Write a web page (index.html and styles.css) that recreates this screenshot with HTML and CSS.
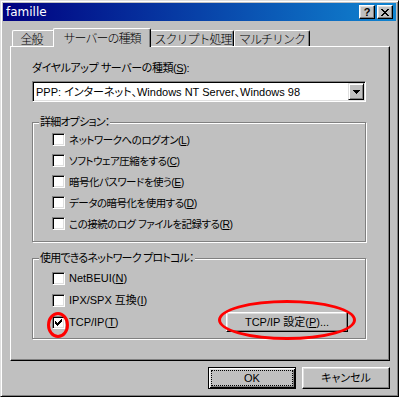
FILE: index.html
```html
<!DOCTYPE html>
<html lang="ja">
<head>
<meta charset="utf-8">
<title>famille</title>
<link rel="stylesheet" href="styles.css">
</head>
<body>
<div class="window">
  <div class="titlebar">
    <span class="title">famille</span>
    <div class="tb-buttons">
      <span class="tb-btn help">?</span>
      <span class="tb-btn close"><svg width="8" height="7" viewBox="0 0 8 7" shape-rendering="crispEdges"><path d="M0 0h2v1h-2zM6 0h2v1h-2zM1 1h2v1h-2zM5 1h2v1h-2zM2 2h4v1h-4zM3 3h2v1h-2zM2 4h4v1h-4zM1 5h2v1h-2zM5 5h2v1h-2zM0 6h2v1h-2zM6 6h2v1h-2z" fill="#000"/></svg></span>
    </div>
  </div>
  <div class="content">
    <div class="tabs">
      <div class="tab t1">全般</div>
      <div class="tab t2 active">サーバーの種類</div>
      <div class="tab t3">スクリプト処理</div>
      <div class="tab t4">マルチリンク</div>
    </div>
    <div class="panel">
      <div class="label">ダイヤルアップ サーバーの種類(<u>S</u>):</div>
      <div class="combo">
        <span class="combo-text">PPP: インターネット、Windows NT Server、Windows 98</span>
        <span class="combo-btn"><svg width="7" height="4" viewBox="0 0 7 4" shape-rendering="crispEdges"><path d="M0 0h7v1h-7zM1 1h5v1h-5zM2 2h3v1h-3zM3 3h1v1h-1z" fill="#000"/></svg></span>
      </div>
      <div class="group g1">
        <div class="group-title">詳細オプション：</div>
        <div class="row"><span class="cb"></span><span class="ja">ネットワークへのログオン(<u>L</u>)</span></div>
        <div class="row"><span class="cb"></span><span class="ja">ソフトウェア圧縮をする(<u>C</u>)</span></div>
        <div class="row"><span class="cb"></span><span class="ja">暗号化パスワードを使う(<u>E</u>)</span></div>
        <div class="row"><span class="cb"></span><span class="ja">データの暗号化を使用する(<u>D</u>)</span></div>
        <div class="row"><span class="cb"></span><span class="ja">この接続のログ ファイルを記録する(<u>R</u>)</span></div>
      </div>
      <div class="group g2">
        <div class="group-title">使用できるネットワーク プロトコル：</div>
        <div class="row"><span class="cb"></span><span>NetBEUI(<u>N</u>)</span></div>
        <div class="row"><span class="cb"></span><span>IPX/SPX 互換(<u>I</u>)</span></div>
        <div class="row">
          <span class="cb"><svg width="7" height="7" viewBox="0 0 7 7" shape-rendering="crispEdges"><path d="M6 0h1v1h-1zM5 1h2v1h-2zM0 2h1v1h-1zM4 2h3v1h-3zM0 3h2v1h-2zM3 3h3v1h-3zM0 4h5v1h-5zM1 5h3v1h-3zM2 6h1v1h-1z" fill="#000"/></svg><span class="mark mark-cb"></span></span>
          <span>TCP/IP(<u>T</u>)</span>
          <span class="tcp-wrap"><button class="btn tcp">TCP/IP 設定(<u>P</u>)...</button><span class="mark mark-btn"></span></span>
        </div>
      </div>
    </div>
    <div class="actions">
      <button class="btn big default"><span class="focus">OK</span></button>
      <button class="btn big">キャンセル</button>
    </div>
  </div>
</div>
</body>
</html>
```
FILE: styles.css
```css
* { box-sizing: border-box; }

body {
  margin: 0;
  background: #c0c0c0;
  font-family: "Liberation Sans", "Noto Sans CJK JP", sans-serif;
  font-size: 11px;
  font-weight: 400;
  color: #000;
  font-feature-settings: "palt";
}

u { text-decoration: underline; text-underline-offset: 1px; }

.window {
  width: 399px;
  height: 397px;
  border: 1px solid;
  border-color: #dfdfdf #000 #000 #dfdfdf;
  box-shadow: inset 1px 1px #fff, inset -1px -1px #808080;
  padding: 2px;
  background: #c0c0c0;
  display: flex;
  flex-direction: column;
}

.titlebar {
  height: 18px;
  flex: none;
  background: linear-gradient(to right, #000080, #1084d0);
  display: flex;
  align-items: center;
  padding: 0 3px 0 3px;
  color: #fff;
}

.title {
  flex: 1;
  font-family: "DejaVu Sans", sans-serif;
  font-size: 12px;
  font-weight: normal;
  line-height: 14px;
}

.tb-buttons { display: flex; gap: 2px; }

.tb-btn {
  width: 16px;
  height: 14px;
  background: #c0c0c0;
  border: 1px solid;
  border-color: #fff #000 #000 #fff;
  box-shadow: inset -1px -1px #808080, inset 1px 1px #dfdfdf;
  display: flex;
  align-items: center;
  justify-content: center;
  color: #000;
}

.help {
  font-family: "Liberation Sans", sans-serif;
  font-weight: bold;
  font-size: 11px;
  line-height: 11px;
}

.content {
  flex: 1;
  display: flex;
  flex-direction: column;
  padding: 7px 6px 5px 7px;
}

.tabs {
  display: flex;
  align-items: flex-end;
  height: 18px;
  padding-left: 2px;
}

.tab {
  height: 16px;
  background: #c0c0c0;
  border: 1px solid;
  border-color: #fff #000 transparent #fff;
  border-bottom: 0;
  border-radius: 2px 2px 0 0;
  box-shadow: inset -1px 0 #808080;
  display: flex;
  align-items: center;
  justify-content: center;
  font-family: "Noto Sans CJK JP", sans-serif;
  font-size: 12px;
  font-weight: 300;
  line-height: 14px;
  font-feature-settings: normal;
  letter-spacing: -1px;
}

.tab.active {
  height: 19px;
  margin: 0 -2px -1px;
  position: relative;
  z-index: 1;
  padding-bottom: 1px;
}

.t1 { width: 43px; padding-right: 4px; }
.t2 { width: 98px; }
.t3 { width: 85px; padding-left: 3px; }
.t4 { width: 76px; }

.panel {
  border: 1px solid;
  border-color: #fff #000 #000 #fff;
  box-shadow: inset -1px -1px #808080;
  padding: 14px 23px 21px 21px;
}

.label { line-height: 14px; letter-spacing: -0.4px; }

.combo {
  margin-top: 6px;
  height: 21px;
  background: #fff;
  border: 1px solid;
  border-color: #808080 #fff #fff #808080;
  box-shadow: inset 1px 1px #000, inset -1px -1px #dfdfdf;
  padding: 1px 1px 1px 2px;
  display: flex;
  align-items: center;
}

.combo-text { flex: 1; padding-left: 1px; line-height: 14px; }

.combo-btn {
  width: 16px;
  height: 17px;
  background: #c0c0c0;
  border: 1px solid;
  border-color: #dfdfdf #000 #000 #dfdfdf;
  box-shadow: inset 1px 1px #fff, inset -1px -1px #808080;
  display: flex;
  align-items: center;
  justify-content: center;
}

.group {
  border: 1px solid #808080;
  box-shadow: inset 1px 1px #fff, 1px 1px #fff;
  padding: 0 17px 7px 0;
}

.g1 { margin-top: 20px; }
.g2 { margin-top: 16px; padding-bottom: 5px; }

.group-title {
  width: max-content;
  margin: -8px 0 0 6px;
  padding: 0 1px;
  background: #c0c0c0;
  line-height: 14px;
  letter-spacing: -0.8px;
}

.g2 .group-title { margin-bottom: 2px; }

.row {
  display: flex;
  align-items: center;
  height: 21px;
  padding-left: 19px;
  gap: 4px;
  line-height: 14px;
}

.ja { font-size: 10.5px; letter-spacing: -0.5px; }

.g2 .row { height: 22px; }

.cb {
  flex: none;
  width: 13px;
  height: 13px;
  background: #fff;
  border: 1px solid;
  border-color: #808080 #fff #fff #808080;
  box-shadow: inset 1px 1px #000, inset -1px -1px #dfdfdf;
  position: relative;
  display: flex;
  align-items: center;
  justify-content: center;
}

.mark {
  position: absolute;
  border: 3px solid #f00;
  border-radius: 50%;
  pointer-events: none;
}

.mark-cb { left: -6px; top: -5px; width: 22px; height: 26px; }

.tcp-wrap {
  margin-left: auto;
  position: relative;
  display: flex;
}

.mark-btn { left: -8px; top: -12px; width: 138px; height: 40px; border-width: 3.5px; }

.btn {
  font: inherit;
  line-height: 14px;
  color: #000;
  background: #c0c0c0;
  border: 1px solid;
  border-color: #fff #000 #000 #fff;
  box-shadow: inset -1px -1px #808080, inset 1px 1px #dfdfdf;
  padding: 0;
  margin: 0;
  display: flex;
  align-items: center;
  justify-content: center;
}

.tcp { width: 122px; height: 20px; }

.actions {
  display: flex;
  justify-content: flex-end;
  gap: 6px;
  margin-top: 6px;
}

.big { width: 88px; height: 22px; }

.btn.default {
  border-color: #000;
  box-shadow: inset 1px 1px #fff, inset -1px -1px #000, inset 2px 2px #dfdfdf, inset -2px -2px #808080;
  padding: 2px;
}

.focus {
  flex: 1;
  align-self: stretch;
  display: flex;
  align-items: center;
  justify-content: center;
  border: 1px dotted #000;
}
```
